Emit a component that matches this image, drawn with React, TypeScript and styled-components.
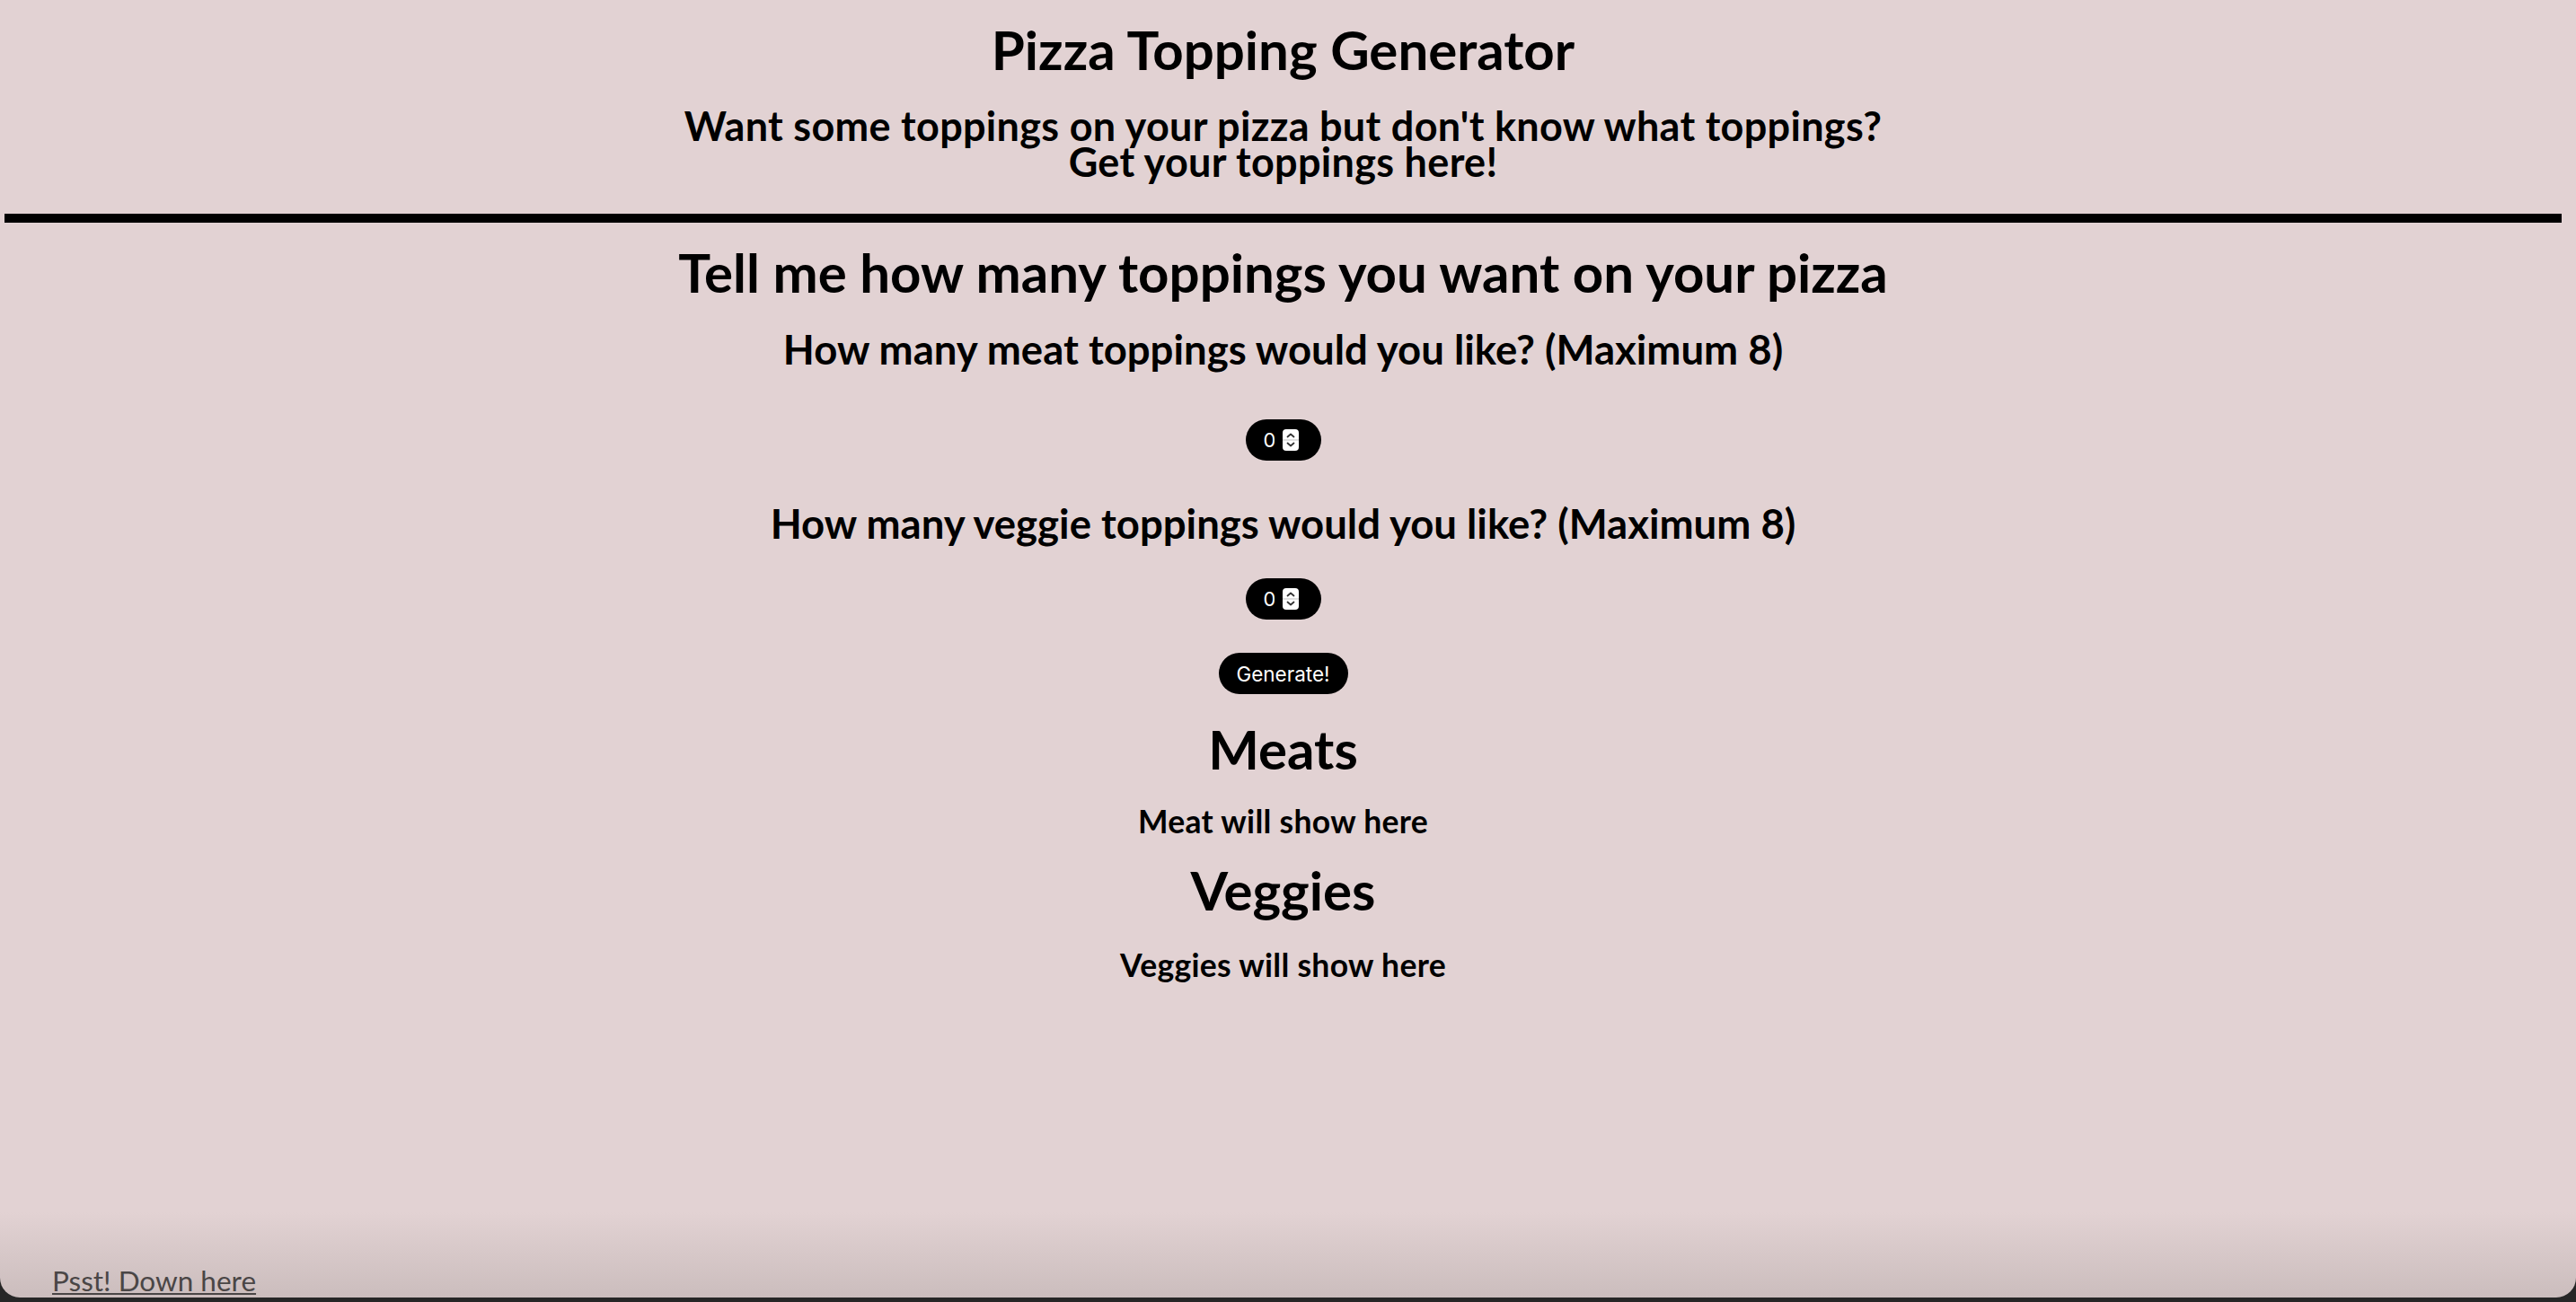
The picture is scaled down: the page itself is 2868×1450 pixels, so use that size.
import styled, { createGlobalStyle } from "styled-components";

const GlobalStyle = createGlobalStyle`
  html, body {
    margin: 0;
    padding: 0;
    background: #262626;
  }
  * {
    box-sizing: border-box;
  }
`;

const Spinner = () => (
  <SpinBox aria-hidden>
    <svg width="18" height="24" viewBox="0 0 18 24">
      <path d="M5.5 8.5 L9 5.5 L12.5 8.5" fill="none" stroke="#333" strokeWidth="1.8" strokeLinecap="round" strokeLinejoin="round" />
      <line x1="0" y1="12" x2="18" y2="12" stroke="#d6d6d6" strokeWidth="1.5" />
      <path d="M5.5 15.5 L9 18.5 L12.5 15.5" fill="none" stroke="#333" strokeWidth="1.8" strokeLinecap="round" strokeLinejoin="round" />
    </svg>
  </SpinBox>
);

const NumberField = ({ label }: { label: string }) => (
  <Stepper>
    <StepperValue type="text" readOnly value="0" aria-label={label} />
    <Spinner />
  </Stepper>
);

const App = () => {
  return (
    <>
      <GlobalStyle />
      <Page>
        <Header>
          <Title>Pizza Topping Generator</Title>
          <Tagline>
            <TaglineLine>
              Want some toppings on your pizza but don't know what toppings?
            </TaglineLine>
            <TaglineLine>Get your toppings here!</TaglineLine>
          </Tagline>
        </Header>
        <Divider />
        <Main>
          <Title $mt={19}>Tell me how many toppings you want on your pizza</Title>
          <Question $mt={22}>
            How many meat toppings would you like? (Maximum 8)
          </Question>
          <FieldRow $mt={51}>
            <NumberField label="meat toppings" />
          </FieldRow>
          <Question $mt={42}>
            How many veggie toppings would you like? (Maximum 8)
          </Question>
          <FieldRow $mt={34}>
            <NumberField label="veggie toppings" />
          </FieldRow>
          <GenerateButton type="button">Generate!</GenerateButton>
          <Title $mt={25}>Meats</Title>
          <Result $mt={24}>Meat will show here</Result>
          <Title $mt={20}>Veggies</Title>
          <Result $mt={27}>Veggies will show here</Result>
        </Main>
        <Footer>
          <FooterLink href="#bottom">Psst! Down here</FooterLink>
        </Footer>
      </Page>
    </>
  );
};

export default App;

const Page = styled.div`
  display: flex;
  flex-direction: column;
  height: 1445px;
  padding: 0 16px 0 5px;
  border-radius: 0 0 22px 22px;
  background: linear-gradient(
    to bottom,
    #e2d2d3 0,
    #e2d2d3 calc(100% - 95px),
    #cbbdbd 100%
  );
  font-family: "Lato", "Open Sans", sans-serif;
  color: #000;
  overflow: hidden;
`;

const Header = styled.header`
  display: flex;
  flex-direction: column;
  align-items: center;
  padding-top: 19px;
`;

const Title = styled.h1<{ $mt?: number }>`
  margin: ${(p) => p.$mt ?? 0}px 0 0;
  font-size: 60px;
  line-height: 72px;
  font-weight: 700;
  text-align: center;
`;

const Tagline = styled.h2`
  display: flex;
  flex-direction: column;
  align-items: center;
  margin: 29px 0 0;
  font-size: 45px;
  font-weight: 700;
  letter-spacing: 0.3px;
  text-align: center;
`;

const TaglineLine = styled.span`
  display: block;
  line-height: 40px;
`;

const Divider = styled.hr`
  margin: 38px 0 0;
  height: 10px;
  border: 0;
  background: #000;
`;

const Main = styled.main`
  display: flex;
  flex-direction: column;
  align-items: center;
`;

const Question = styled.h2<{ $mt: number }>`
  margin: ${(p) => p.$mt}px 0 0;
  font-size: 45.5px;
  line-height: 55px;
  font-weight: 700;
  text-align: center;
`;

const FieldRow = styled.div<{ $mt: number }>`
  display: flex;
  justify-content: center;
  margin-top: ${(p) => p.$mt}px;
`;

const Stepper = styled.div`
  display: flex;
  align-items: center;
  gap: 9px;
  width: 84px;
  height: 46px;
  padding: 0 0 0 20px;
  border-radius: 23px;
  background: #000;
`;

const StepperValue = styled.input`
  width: 12px;
  padding: 0;
  border: 0;
  outline: none;
  background: transparent;
  color: #fff;
  font-family: "Inter", sans-serif;
  font-size: 22px;
`;

const SpinBox = styled.span`
  display: flex;
  width: 18px;
  height: 24px;
  border-radius: 4px;
  background: #fff;
  overflow: hidden;
`;

const GenerateButton = styled.button`
  margin-top: 37px;
  width: 144px;
  height: 46px;
  padding: 0;
  border: 0;
  border-radius: 23px;
  background: #000;
  color: #fff;
  font-family: "Inter", sans-serif;
  font-size: 22.5px;
  cursor: pointer;
`;

const Result = styled.p<{ $mt: number }>`
  margin: ${(p) => p.$mt}px 0 0;
  font-size: 35.5px;
  line-height: 41px;
  font-weight: 700;
  letter-spacing: 0.3px;
  text-align: center;
`;

const Footer = styled.footer`
  margin-top: auto;
  padding: 0 0 3px 53px;
`;

const FooterLink = styled.a`
  font-size: 31.5px;
  line-height: 31px;
  color: #4a4646;
  text-decoration: underline;
  text-decoration-thickness: 2px;
  text-underline-offset: 2px;
`;
